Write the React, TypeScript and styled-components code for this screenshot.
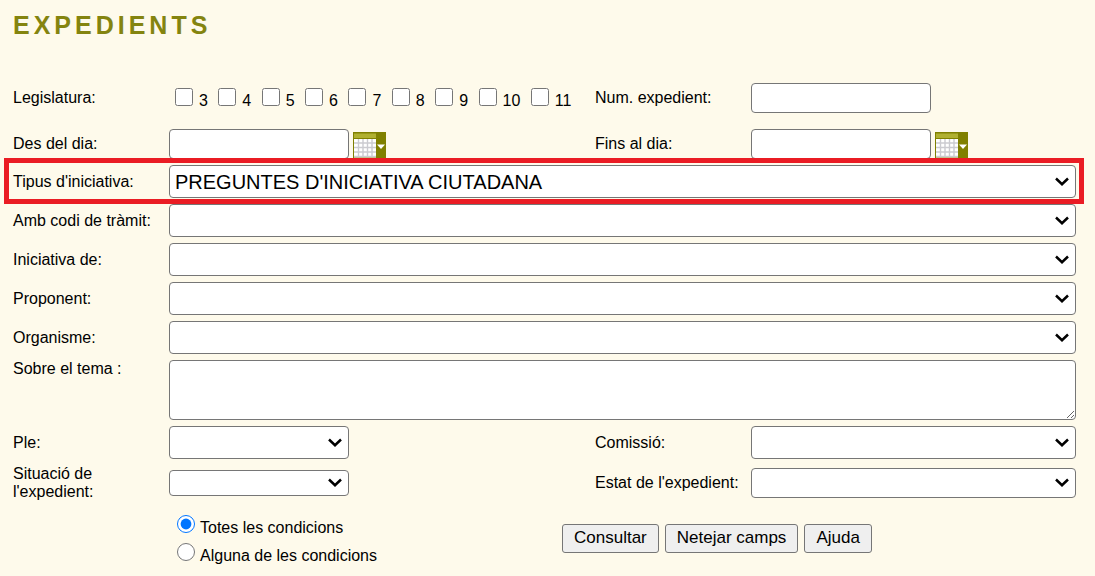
import React from "react";
import styled, { createGlobalStyle } from "styled-components";

const GlobalStyle = createGlobalStyle`
  *, *::before, *::after { box-sizing: border-box; }
  body {
    margin: 0;
    background: #fefaeb;
    color: #000;
    font: 16px/18px "Liberation Sans", Arial, sans-serif;
  }
`;

const Page = styled.main`
  padding: 12px 19px 6px 13px;
`;

const Title = styled.h1`
  margin: 0 0 45px;
  color: #84840f;
  font-size: 25px;
  line-height: 26px;
  font-weight: bold;
  letter-spacing: 4px;
`;

const Form = styled.form`
  display: flex;
  flex-direction: column;
  gap: 6px;
`;

const Row = styled.div<{ $top?: boolean; $spaced?: boolean }>`
  display: grid;
  grid-template-columns: 156px minmax(0, 426fr) 156px minmax(0, 325fr);
  align-items: ${(p) => (p.$top ? "start" : "center")};
  margin-bottom: ${(p) => (p.$spaced ? "10px" : "0")};
`;

const HighlightedRow = styled(Row)`
  position: relative;

  &::after {
    content: "";
    position: absolute;
    inset: -7px -8px -6px -9px;
    border: 5px solid #ea1c24;
    pointer-events: none;
  }
`;

const Caption = styled.label`
  padding-right: 8px;
`;

const GroupCaption = styled.span`
  padding-right: 8px;
`;

const RightCaption = styled.label``;

const control = `
  border: 1px solid #767676;
  border-radius: 4px;
  background: #fff;
  color: #000;
  font-family: inherit;
  font-size: 20px;
`;

const TextInput = styled.input`
  ${control}
  display: block;
  width: 180px;
  height: 30px;
  padding: 0 5px;
`;

const TextArea = styled.textarea`
  ${control}
  display: block;
  grid-column: 2 / -1;
  width: 100%;
  height: 60px;
  padding: 4px 5px;
`;

const SelectBox = styled.div<{ $wide?: boolean; $short?: boolean }>`
  position: relative;
  grid-column: ${(p) => (p.$wide ? "2 / -1" : "auto")};
  width: ${(p) => (p.$short ? "180px" : "100%")};
`;

const NativeSelect = styled.select<{ $height: number }>`
  ${control}
  display: block;
  appearance: none;
  width: 100%;
  height: ${(p) => p.$height}px;
  padding: 0 28px 0 5px;
`;

const Chevron = styled.svg`
  position: absolute;
  right: 7px;
  top: 50%;
  margin-top: -5px;
  pointer-events: none;
`;

const DateField = styled.div`
  display: flex;
  align-items: flex-end;
  gap: 4px;
`;

const CalendarButton = styled.button`
  display: block;
  width: 33px;
  height: 27px;
  padding: 0;
  border: 0;
  background: #808000;
  cursor: pointer;

  svg { display: block; }
`;

const TermList = styled.div`
  padding-top: 1px;
  white-space: nowrap;
`;

const TickBox = styled.input`
  width: 18px;
  height: 18px;
  margin: 0 6px 2px;
  vertical-align: baseline;
`;

const Footer = styled.div`
  display: flex;
  align-items: flex-start;
  padding: 8px 0 0 156px;
`;

const Conditions = styled.div`
  display: flex;
  flex: 0 1 393px;
  flex-direction: column;
  gap: 8px;
`;

const Condition = styled.label`
  display: block;
  height: 20px;
`;

const RadioButton = styled.input`
  width: 18px;
  height: 18px;
  margin: 0 5px 2px 8px;
  vertical-align: baseline;
`;

const Actions = styled.div`
  display: flex;
  gap: 6px;
  padding-top: 9px;
`;

const Button = styled.button`
  height: 29px;
  padding: 0 11px 2px;
  border: 1px solid #767676;
  border-radius: 3px;
  background: #efefef;
  color: #000;
  font-family: inherit;
  font-size: 17px;
  line-height: 20px;
`;

type SelectProps = {
  id: string;
  wide?: boolean;
  short?: boolean;
  height?: number;
  value?: string;
};

function Select({ id, wide, short, height = 33, value = "" }: SelectProps) {
  return (
    <SelectBox $wide={wide} $short={short}>
      <NativeSelect id={id} $height={height} defaultValue={value}>
        <option value={value}>{value}</option>
      </NativeSelect>
      <Chevron width="14" height="9" viewBox="0 0 14 9" aria-hidden="true">
        <path d="M1 1.5 L7 7.2 L13 1.5" fill="none" stroke="#000" strokeWidth="2.5" />
      </Chevron>
    </SelectBox>
  );
}

function DateInput({ id }: { id: string }) {
  return (
    <DateField>
      <TextInput id={id} type="text" />
      <CalendarButton type="button" aria-label="Calendari">
        <svg width="33" height="27" viewBox="0 0 33 27" aria-hidden="true">
          <rect x="1" y="1.5" width="22" height="4.5" fill="#b0b030" />
          <rect x="1" y="7" width="22" height="18.5" fill="#fff" />
          <path
            d="M5.5 7V25M10 7V25M14.5 7V25M19 7V25M1 11H23M1 15.5H23M1 20H23M1 24.5H23"
            stroke="#cbcbd0"
            strokeWidth="1.4"
          />
          <path d="M24 12.5h8l-4 4.5z" fill="#fff" />
        </svg>
      </CalendarButton>
    </DateField>
  );
}

const terms = [3, 4, 5, 6, 7, 8, 9, 10, 11];

const wideSelects = [
  { id: "tramit", label: "Amb codi de tràmit:" },
  { id: "iniciativa", label: "Iniciativa de:" },
  { id: "proponent", label: "Proponent:" },
  { id: "organisme", label: "Organisme:" },
];

export default function App() {
  return (
    <>
      <GlobalStyle />
      <Page>
        <Title>EXPEDIENTS</Title>
        <Form onSubmit={(e) => e.preventDefault()}>
          <Row $spaced>
            <GroupCaption id="legislatura">Legislatura:</GroupCaption>
            <TermList role="group" aria-labelledby="legislatura">
              {terms.map((n) => (
                <React.Fragment key={n}>
                  <label>
                    <TickBox type="checkbox" name="legislatura" value={n} />
                    {n}
                  </label>{" "}
                </React.Fragment>
              ))}
            </TermList>
            <RightCaption htmlFor="num">Num. expedient:</RightCaption>
            <TextInput id="num" type="text" />
          </Row>
          <Row>
            <Caption htmlFor="desde">Des del dia:</Caption>
            <DateInput id="desde" />
            <RightCaption htmlFor="fins">Fins al dia:</RightCaption>
            <DateInput id="fins" />
          </Row>
          <HighlightedRow>
            <Caption htmlFor="tipus">Tipus d'iniciativa:</Caption>
            <Select id="tipus" wide value="PREGUNTES D'INICIATIVA CIUTADANA" />
          </HighlightedRow>
          {wideSelects.map((s) => (
            <Row key={s.id}>
              <Caption htmlFor={s.id}>{s.label}</Caption>
              <Select id={s.id} wide />
            </Row>
          ))}
          <Row $top>
            <Caption htmlFor="tema">Sobre el tema :</Caption>
            <TextArea id="tema" />
          </Row>
          <Row>
            <Caption htmlFor="ple">Ple:</Caption>
            <Select id="ple" short />
            <RightCaption htmlFor="comissio">Comissió:</RightCaption>
            <Select id="comissio" />
          </Row>
          <Row>
            <Caption htmlFor="situacio">Situació de l'expedient:</Caption>
            <Select id="situacio" short height={26} />
            <RightCaption htmlFor="estat">Estat de l'expedient:</RightCaption>
            <Select id="estat" height={30} />
          </Row>
          <Footer>
            <Conditions role="radiogroup" aria-label="Condicions">
              <Condition>
                <RadioButton type="radio" name="condicions" defaultChecked />
                Totes les condicions
              </Condition>
              <Condition>
                <RadioButton type="radio" name="condicions" />
                Alguna de les condicions
              </Condition>
            </Conditions>
            <Actions>
              <Button type="submit">Consultar</Button>
              <Button type="reset">Netejar camps</Button>
              <Button type="button">Ajuda</Button>
            </Actions>
          </Footer>
        </Form>
      </Page>
    </>
  );
}
